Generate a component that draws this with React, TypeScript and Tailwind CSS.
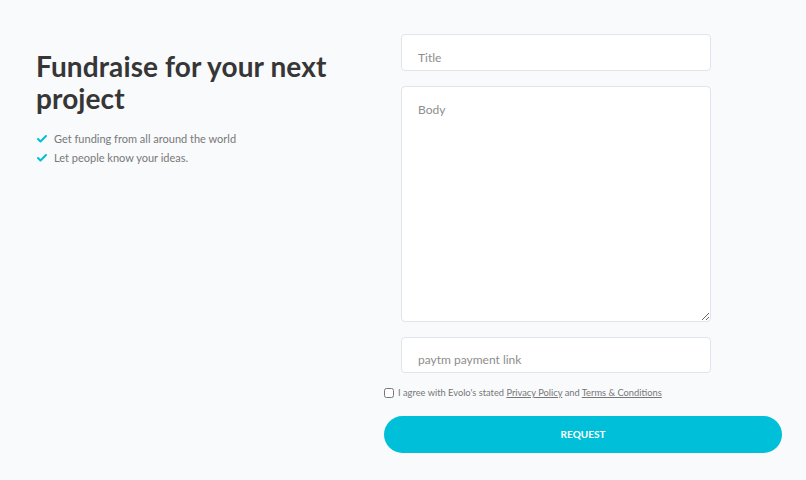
import { Check } from 'lucide-react';

const fieldClass =
  'w-full rounded-[4px] border border-[#dfe5ea] bg-white px-4 text-[12px] text-[#555] placeholder:text-[#8d8d8d] outline-none';

export default function App() {
  return (
    <div
      className="flex h-[480px] w-[806px] bg-[#f9fafc]"
      style={{ fontFamily: 'Lato, "Open Sans", sans-serif' }}
    >
      <div className="w-[384px] shrink-0 pl-[36px] pt-[50px]">
        <h1 className="text-[28px] font-bold leading-[32px] tracking-[0.1px] text-[#363636]">
          Fundraise for your next
          <br />
          project
        </h1>
        <ul className="mt-[17px] space-y-[3px] text-[11px] text-[#787878]">
          <li className="flex items-center gap-[6px] leading-[16px]">
            <Check className="h-[12px] w-[12px] text-[#00bfd8]" strokeWidth={4} />
            Get funding from all around the world
          </li>
          <li className="flex items-center gap-[6px] leading-[16px]">
            <Check className="h-[12px] w-[12px] text-[#00bfd8]" strokeWidth={4} />
            Let people know your ideas.
          </li>
        </ul>
      </div>

      <form className="w-[398px] pt-[34px]">
        <div className="ml-[17px] flex w-[310px] flex-col gap-[15px]">
          <input type="text" placeholder="Title" className={`${fieldClass} h-[37px] pt-[9px]`} />
          <textarea
            placeholder="Body"
            className={`${fieldClass} h-[236px] pt-[14px]`}
          />
          <input
            type="text"
            placeholder="paytm payment link"
            className={`${fieldClass} h-[36px] pt-[9px]`}
          />
        </div>

        <label className="mt-[13px] flex items-center gap-[4px] text-[9.3px] text-[#777]">
          <input type="checkbox" className="h-[10px] w-[10px]" />
          <span>
            I agree with Evolo's stated <span className="underline">Privacy Policy</span> and{' '}
            <span className="underline">Terms &amp; Conditions</span>
          </span>
        </label>

        <button
          type="button"
          className="mt-[16px] h-[37px] w-full rounded-full bg-[#00bfd8] text-[10px] font-bold text-white"
        >
          REQUEST
        </button>
      </form>
    </div>
  );
}
